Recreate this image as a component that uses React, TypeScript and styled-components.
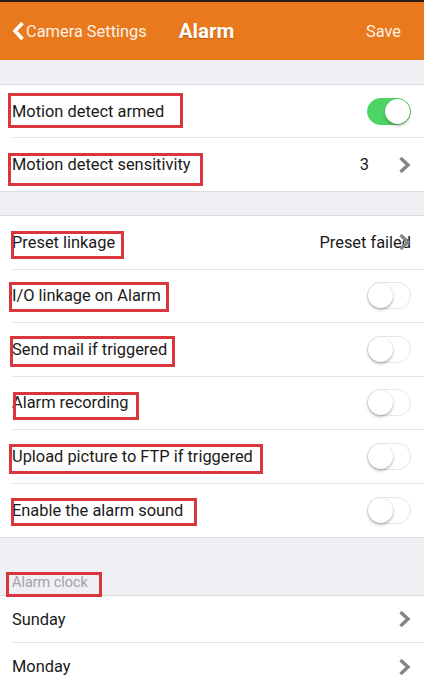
import styled, { createGlobalStyle } from "styled-components";

interface MarkBox {
  left: number;
  top: number;
  w: number;
  h: number;
}

interface Setting {
  label: string;
  kind: "switch" | "link";
  on?: boolean;
  value?: string;
  valueGap?: number;
  mark?: MarkBox;
}

const alarmGroup: Setting[] = [
  { label: "Motion detect armed", kind: "switch", on: true, mark: { left: 8, top: 8, w: 175, h: 35 } },
  { label: "Motion detect sensitivity", kind: "link", value: "3", valueGap: 29, mark: { left: 8, top: 15, w: 195, h: 33 } },
];

const linkageGroup: Setting[] = [
  { label: "Preset linkage", kind: "link", value: "Preset failed", valueGap: -13, mark: { left: 11, top: 15, w: 113, h: 28 } },
  { label: "I/O linkage on Alarm", kind: "switch", mark: { left: 9, top: 12, w: 160, h: 30 } },
  { label: "Send mail if triggered", kind: "switch", mark: { left: 10, top: 13, w: 165, h: 31 } },
  { label: "Alarm recording", kind: "switch", mark: { left: 13, top: 15, w: 126, h: 28 } },
  { label: "Upload picture to FTP if triggered", kind: "switch", mark: { left: 9, top: 14, w: 254, h: 30 } },
  { label: "Enable the alarm sound", kind: "switch", mark: { left: 11, top: 14, w: 186, h: 28 } },
];

const days: Setting[] = [
  { label: "Sunday", kind: "link" },
  { label: "Monday", kind: "link" },
];

function Chevron() {
  return (
    <ChevronIcon width="13" height="18" viewBox="0 0 13 18">
      <polyline points="2.5,2 10,9 2.5,16" fill="none" stroke="#858585" strokeWidth="3.4" />
    </ChevronIcon>
  );
}

function SettingsGroup(props: { items: Setting[]; rowHeight: number }) {
  return (
    <Group>
      {props.items.map((item, i) => (
        <Row key={item.label}>
          <RowInner $h={props.rowHeight} $last={i === props.items.length - 1}>
            <Label>{item.label}</Label>
            {item.kind === "switch" ? (
              <Switch $on={!!item.on}>
                <Knob $on={!!item.on} />
              </Switch>
            ) : (
              <Trailing>
                {item.value && <Value $gap={item.valueGap ?? 0}>{item.value}</Value>}
                <Chevron />
              </Trailing>
            )}
          </RowInner>
          {item.mark && (
            <Mark
              style={{
                left: item.mark.left,
                top: item.mark.top,
                width: item.mark.w,
                height: item.mark.h,
              }}
            />
          )}
        </Row>
      ))}
    </Group>
  );
}

export default function App() {
  return (
    <Page>
      <GlobalStyle />
      <StatusEdge />
      <Header>
        <Back>
          <svg width="13" height="20" viewBox="0 0 13 20">
            <polyline points="10.5,2 3,10 10.5,18" fill="none" stroke="#fff" strokeWidth="3.6" />
          </svg>
          <span>Camera Settings</span>
        </Back>
        <Title>Alarm</Title>
        <Save>Save</Save>
      </Header>
      <Gap $h={24} />
      <SettingsGroup items={alarmGroup} rowHeight={53} />
      <Gap $h={23} />
      <SettingsGroup items={linkageGroup} rowHeight={53.5} />
      <SectionHeader>
        <SectionLabel>Alarm clock</SectionLabel>
        <Mark style={{ left: 6, top: 34, width: 96, height: 25 }} />
      </SectionHeader>
      <SettingsGroup items={days} rowHeight={47} />
    </Page>
  );
}

const GlobalStyle = createGlobalStyle`
  body {
    margin: 0;
    background: #efeff4;
    font-family: Roboto, "Noto Sans", "Liberation Sans", sans-serif;
  }
  * {
    box-sizing: border-box;
  }
`;

const Page = styled.div`
  width: 424px;
  min-height: 685px;
  background: #efeff4;
  overflow: hidden;
`;

const StatusEdge = styled.div`
  height: 2px;
  background: #2a1b0e;
`;

const Header = styled.div`
  height: 58px;
  background: #e8791c;
  display: grid;
  grid-template-columns: 1fr auto 1fr;
  align-items: center;
  padding: 0 23px 0 12px;
  color: #fff;
`;

const Back = styled.div`
  display: flex;
  align-items: center;
  gap: 1px;
  font-size: 16.4px;
  color: #fdf1e6;
  svg {
    display: block;
  }
`;

const Title = styled.div`
  font-size: 20.5px;
  font-weight: 700;
  text-shadow: 0 1px 1px rgba(90, 40, 0, 0.35);
`;

const Save = styled.div`
  justify-self: end;
  font-size: 16.4px;
  color: #fdf1e6;
`;

const Gap = styled.div<{ $h: number }>`
  height: ${(p) => p.$h}px;
`;

const Group = styled.div`
  background: #fff;
  border-top: 1px solid #dcdce0;
  border-bottom: 1px solid #dcdce0;
`;

const Row = styled.div`
  position: relative;
  padding-left: 12px;
`;

const RowInner = styled.div<{ $h: number; $last: boolean }>`
  height: ${(p) => p.$h}px;
  display: flex;
  align-items: center;
  justify-content: space-between;
  padding-right: 13px;
  border-bottom: ${(p) => (p.$last ? "none" : "1px solid #e4e4e6")};
`;

const Label = styled.span`
  font-size: 16.4px;
  color: #1a1a1a;
`;

const Trailing = styled.div`
  display: flex;
  align-items: center;
`;

const Value = styled.span<{ $gap: number }>`
  font-size: 16.4px;
  color: #1a1a1a;
  margin-right: ${(p) => p.$gap}px;
`;

const ChevronIcon = styled.svg`
  display: block;
  position: relative;
`;

const Switch = styled.div<{ $on: boolean }>`
  position: relative;
  width: 44px;
  height: 27px;
  border-radius: 14px;
  background: ${(p) => (p.$on ? "#4cd464" : "#fff")};
  border: 1px solid ${(p) => (p.$on ? "#4cd464" : "#e6e6e8")};
`;

const Knob = styled.div<{ $on: boolean }>`
  position: absolute;
  top: 0;
  left: ${(p) => (p.$on ? "17px" : "0")};
  width: 25px;
  height: 25px;
  border-radius: 50%;
  background: #fff;
  box-shadow: 0 2px 3px rgba(0, 0, 0, 0.25), 0 0 0 0.5px rgba(0, 0, 0, 0.08);
`;

const Mark = styled.div`
  position: absolute;
  border: 3px solid #d9353c;
  pointer-events: none;
`;

const SectionHeader = styled.div`
  position: relative;
  height: 57px;
  display: flex;
  align-items: flex-end;
  padding: 0 12px 4px;
`;

const SectionLabel = styled.span`
  font-size: 14.4px;
  line-height: 16px;
  color: #a2a2a6;
`;
